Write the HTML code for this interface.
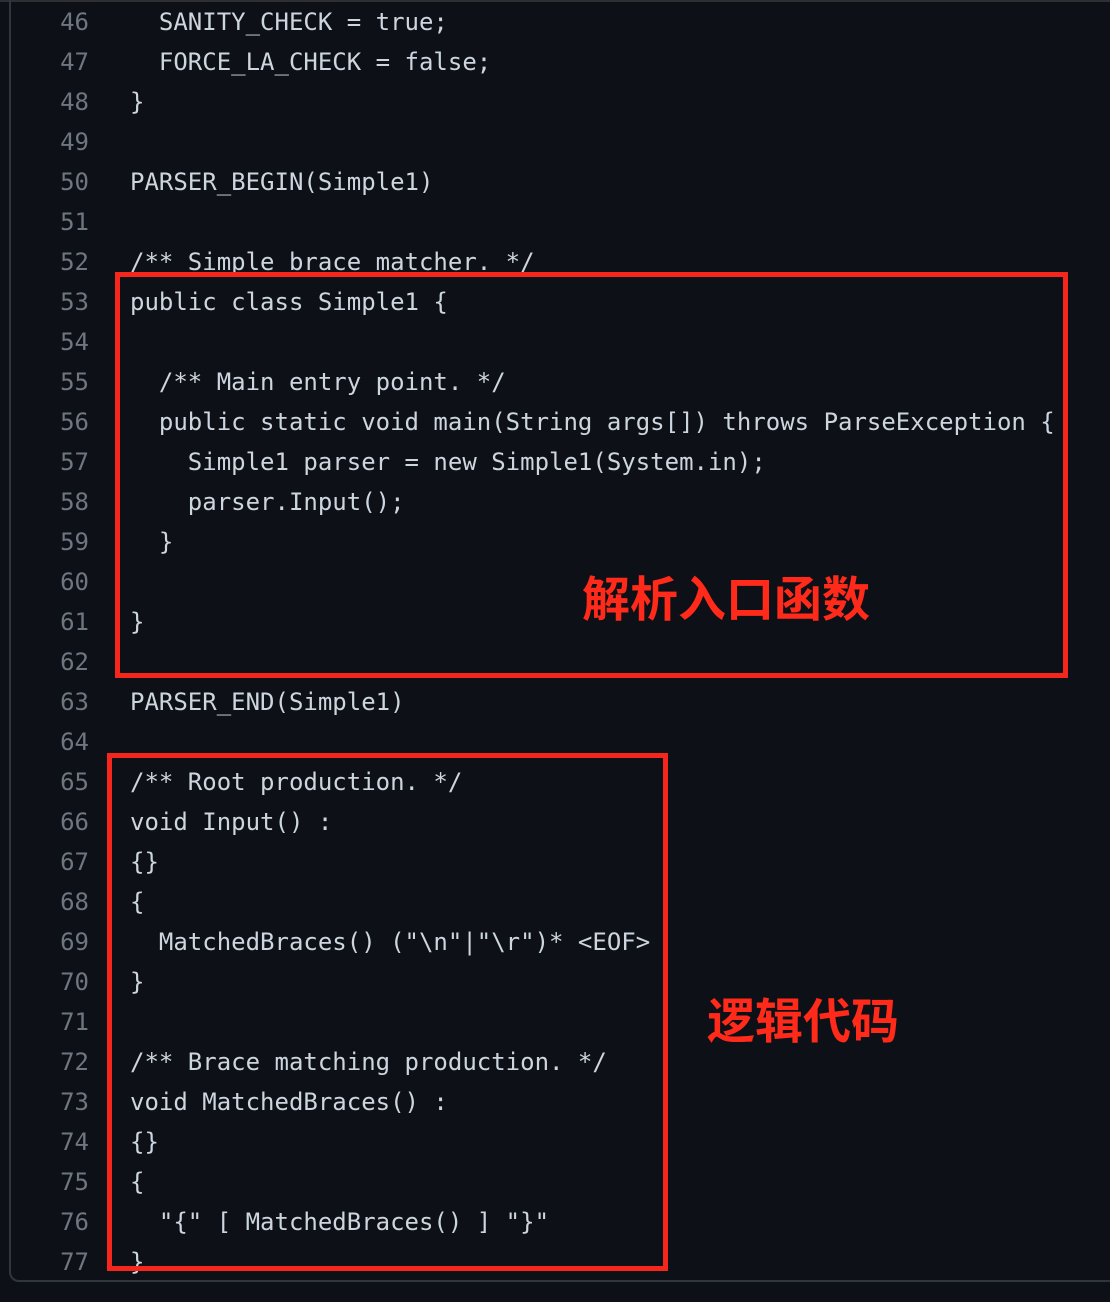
<!DOCTYPE html>
<html><head><meta charset="utf-8"><style>
html,body{margin:0;padding:0;background:#0d1117;width:1110px;height:1302px;overflow:hidden;position:relative}
.top{position:absolute;left:0;top:0;width:1110px;height:2px;background:#2d2f33}
.panel{position:absolute;left:9px;top:-10px;width:1120px;height:1292px;border:2px solid #30363d;border-radius:10px;box-sizing:border-box}
.code{position:absolute;left:0;top:2px;font-family:"DejaVu Sans Mono","Liberation Mono",monospace;font-size:24px;line-height:40px;color:#cdd5df;white-space:pre}
.ln{display:inline-block;width:89px;text-align:right;color:#6e7681;margin-right:41px}
.box{position:absolute;border:5px solid #f5261c;box-sizing:border-box}
.lbl{position:absolute;color:#ff2a1a;font-family:"Noto Sans CJK SC",sans-serif;font-weight:bold;font-size:48px;line-height:1;white-space:nowrap}
</style></head><body>
<div class="top"></div>
<div class="panel"></div>
<div class="code"><div><span class="ln">46</span>  SANITY_CHECK = true;</div><div><span class="ln">47</span>  FORCE_LA_CHECK = false;</div><div><span class="ln">48</span>}</div><div><span class="ln">49</span></div><div><span class="ln">50</span>PARSER_BEGIN(Simple1)</div><div><span class="ln">51</span></div><div><span class="ln">52</span>/** Simple brace matcher. */</div><div><span class="ln">53</span>public class Simple1 {</div><div><span class="ln">54</span></div><div><span class="ln">55</span>  /** Main entry point. */</div><div><span class="ln">56</span>  public static void main(String args[]) throws ParseException {</div><div><span class="ln">57</span>    Simple1 parser = new Simple1(System.in);</div><div><span class="ln">58</span>    parser.Input();</div><div><span class="ln">59</span>  }</div><div><span class="ln">60</span></div><div><span class="ln">61</span>}</div><div><span class="ln">62</span></div><div><span class="ln">63</span>PARSER_END(Simple1)</div><div><span class="ln">64</span></div><div><span class="ln">65</span>/** Root production. */</div><div><span class="ln">66</span>void Input() :</div><div><span class="ln">67</span>{}</div><div><span class="ln">68</span>{</div><div><span class="ln">69</span>  MatchedBraces() ("\n"|"\r")* &lt;EOF&gt;</div><div><span class="ln">70</span>}</div><div><span class="ln">71</span></div><div><span class="ln">72</span>/** Brace matching production. */</div><div><span class="ln">73</span>void MatchedBraces() :</div><div><span class="ln">74</span>{}</div><div><span class="ln">75</span>{</div><div><span class="ln">76</span>  "{" [ MatchedBraces() ] "}"</div><div><span class="ln">77</span>}</div></div>
<div class="box" style="left:115px;top:272px;width:953px;height:406px"></div>
<div class="box" style="left:107px;top:753px;width:561px;height:518px"></div>
<div class="lbl" style="left:582px;top:571px">解析入口函数</div>
<div class="lbl" style="left:707px;top:993px">逻辑代码</div>
</body></html>
